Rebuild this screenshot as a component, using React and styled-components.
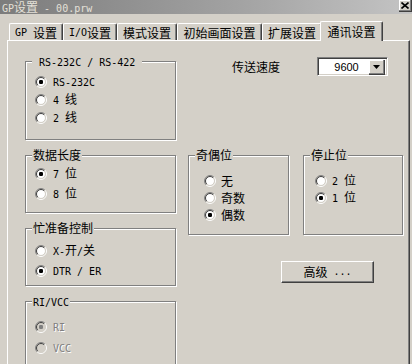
import React from "react";
import styled, { createGlobalStyle } from "styled-components";

const Global = createGlobalStyle`
  html, body { margin: 0; padding: 0; background: #d4d0c8; overflow: hidden; }
  body { font-family: "Noto Sans CJK SC", "Liberation Sans", sans-serif; font-size: 12px; color: #000; }
  #root { height: 364px; overflow: hidden; }
`;

const Latin = styled.span`
  font-family: "DejaVu Sans Mono", "Liberation Mono", monospace;
  font-size: 10px;
  white-space: pre;
`;

function Txt({ children }) {
  const parts = String(children).split(/([\x20-\x7E]+)/);
  return parts.map((p, i) =>
    p === "" ? null : /^[\x20-\x7E]+$/.test(p) ? (
      <Latin key={i}>{p}</Latin>
    ) : (
      <React.Fragment key={i}>{p}</React.Fragment>
    )
  );
}

const Window = styled.div`
  width: 412px;
  height: 364px;
  display: flex;
  flex-direction: column;
`;

const TitleBar = styled.div`
  height: 14px;
  display: flex;
  align-items: flex-start;
  justify-content: space-between;
  background: linear-gradient(90deg, #7c7c7c 0%, #a4a4a4 60%, #c4c4c4 100%);
  color: #e4e0d8;
  line-height: 14px;
  padding-left: 2px;
  font-size: 12px;
`;

const TitleText = styled.span`
  line-height: 14px;
  height: 14px;
`;

const CloseBtn = styled.div`
  width: 13px;
  height: 12px;
  box-sizing: border-box;
  background: #d4d0c8;
  border-right: 1px solid #404040;
  border-bottom: 1px solid #404040;
  box-shadow: inset -1px -1px 0 #808080, inset 1px 1px 0 #fff;
  display: flex;
  align-items: center;
  justify-content: center;
`;

const TabRow = styled.div`
  margin-top: 7px;
  height: 19px;
  display: flex;
  align-items: flex-end;
  padding-left: 9px;
  position: relative;
  z-index: 2;
`;

const Tab = styled.div`
  box-sizing: border-box;
  width: ${(p) => (p.$active ? p.$w + 4 : p.$w)}px;
  height: ${(p) => (p.$active ? 20 : 17)}px;
  margin: ${(p) => (p.$active ? "0 -2px -1px -2px" : "0")};
  background: #d4d0c8;
  border-top: 1px solid #fff;
  border-left: 1px solid #fff;
  border-right: 1px solid #404040;
  border-top-left-radius: 2px;
  border-top-right-radius: 2px;
  box-shadow: inset -1px 0 0 #808080;
  display: flex;
  align-items: center;
  justify-content: center;
  line-height: 14px;
  padding-top: ${(p) => (p.$active ? 0 : 1)}px;
  white-space: nowrap;
`;

const Panel = styled.div`
  margin-left: 7px;
  width: 403px;
  height: 340px;
  box-sizing: border-box;
  border-top: 1px solid #fff;
  border-left: 1px solid #fff;
  border-right: 1px solid #404040;
  box-shadow: inset -1px 0 0 #808080;
  padding: 16px 5px 0 17px;
  display: grid;
  grid-template-columns: 151px 215px;
  column-gap: 12px;
  align-items: start;
`;

const LeftCol = styled.div`
  padding-top: 4px;
  display: flex;
  flex-direction: column;
  gap: 15px;
`;

const RightCol = styled.div`
  display: flex;
  flex-direction: column;
`;

const Group = styled.div`
  position: relative;
  box-sizing: border-box;
  width: ${(p) => p.$w}px;
  height: ${(p) => p.$h}px;
  border: 1px solid #808080;
  box-shadow: inset 1px 1px 0 #fff, 1px 1px 0 #fff;
  padding: ${(p) => p.$pt}px 0 0 ${(p) => p.$pl}px;
  display: flex;
  flex-direction: column;
  gap: ${(p) => p.$gap}px;
`;

const Legend = styled.div`
  position: absolute;
  top: -7px;
  left: 6px;
  height: 12px;
  line-height: 12px;
  background: #d4d0c8;
  padding: 0 1px;
  white-space: pre;
  color: #000;
`;

const Option = styled.div`
  display: flex;
  align-items: center;
  gap: ${(p) => p.$gap || 6}px;
  height: 12px;
  line-height: 12px;
  white-space: nowrap;
  color: ${(p) => (p.$disabled ? "#808080" : "#000")};
  text-shadow: ${(p) => (p.$disabled ? "1px 1px 0 #fff" : "none")};
`;

const RadioSvg = styled.svg`
  flex: none;
  display: block;
`;

function Radio({ checked, disabled }) {
  return (
    <RadioSvg width="12" height="12" viewBox="0 0 12 12">
      <circle cx="6" cy="6" r="4.2" fill={disabled ? "#d4d0c8" : "#fff"} />
      <path d="M2.111 9.889 A5.5 5.5 0 0 1 9.889 2.111" stroke="#808080" fill="none" />
      <path d="M9.889 2.111 A5.5 5.5 0 0 1 2.111 9.889" stroke="#fff" fill="none" />
      <path d="M2.818 9.182 A4.5 4.5 0 0 1 9.182 2.818" stroke="#404040" fill="none" />
      <path d="M9.182 2.818 A4.5 4.5 0 0 1 2.818 9.182" stroke="#d4d0c8" fill="none" />
      {checked && <rect x="4" y="4" width="4" height="4" rx="1.2" fill={disabled ? "#808080" : "#000"} />}
    </RadioSvg>
  );
}

function Opt({ label, checked, disabled, gap }) {
  return (
    <Option $disabled={disabled} $gap={gap}>
      <Radio checked={checked} disabled={disabled} />
      <span>
        <Txt>{label}</Txt>
      </span>
    </Option>
  );
}

const SpeedRow = styled.div`
  display: flex;
  align-items: center;
  height: 19px;
  padding-left: 44px;
  gap: 37px;
`;

const SpeedLabel = styled.span`
  line-height: 12px;
  padding-top: 1px;
`;

const Select = styled.div`
  box-sizing: border-box;
  width: 71px;
  height: 19px;
  border-top: 1px solid #808080;
  border-left: 1px solid #808080;
  border-right: 1px solid #fff;
  border-bottom: 1px solid #fff;
  box-shadow: inset 1px 1px 0 #404040, inset -1px -1px 0 #d4d0c8;
  background: #fff;
  display: flex;
  padding: 2px;
`;

const SelectValue = styled.div`
  flex: 1;
  text-align: center;
  font-family: "Liberation Sans", sans-serif;
  font-size: 11px;
  line-height: 15px;
  padding-left: 4px;
`;

const DropBtn = styled.div`
  box-sizing: border-box;
  width: 16px;
  height: 15px;
  background: #d4d0c8;
  border-right: 1px solid #404040;
  border-bottom: 1px solid #404040;
  box-shadow: inset -1px -1px 0 #808080, inset 1px 1px 0 #fff;
  display: flex;
  align-items: center;
  justify-content: center;
`;

const GroupRow = styled.div`
  margin-top: 79px;
  display: flex;
  gap: 14px;
`;

const Button = styled.div`
  margin-top: 26px;
  margin-left: 93px;
  box-sizing: border-box;
  width: 93px;
  height: 22px;
  background: #d4d0c8;
  border-top: 1px solid #fff;
  border-left: 1px solid #fff;
  border-right: 1px solid #404040;
  border-bottom: 1px solid #404040;
  box-shadow: inset -1px -1px 0 #808080;
  display: flex;
  align-items: center;
  justify-content: center;
  line-height: 12px;
  white-space: pre;
`;

const tabs = [
  { label: "GP 设置", w: 54 },
  { label: "I/O设置", w: 54 },
  { label: "模式设置", w: 60 },
  { label: "初始画面设置", w: 85 },
  { label: "扩展设置", w: 60 },
  { label: "通讯设置", w: 59, active: true },
];

export default function App() {
  return (
    <Window>
      <Global />
      <TitleBar>
        <TitleText>
          <Txt>{"GP设置 - 00.prw"}</Txt>
        </TitleText>
        <CloseBtn>
          <svg width="8" height="7" viewBox="0 0 8 7">
            <path d="M0.5 0.5 L7.5 6.5 M7.5 0.5 L0.5 6.5" stroke="#000" strokeWidth="1.6" />
          </svg>
        </CloseBtn>
      </TitleBar>
      <TabRow>
        {tabs.map((t) => (
          <Tab key={t.label} $w={t.w} $active={t.active}>
            <Txt>{t.label}</Txt>
          </Tab>
        ))}
      </TabRow>
      <Panel>
        <LeftCol>
          <Group $w={151} $h={79} $pt={14} $pl={9} $gap={6}>
            <Legend>
              <Txt>{" RS-232C / RS-422 "}</Txt>
            </Legend>
            <Opt label="RS-232C" checked />
            <Opt label="4 线" />
            <Opt label="2 线" />
          </Group>
          <Group $w={151} $h={58} $pt={12} $pl={9} $gap={8}>
            <Legend>数据长度</Legend>
            <Opt label="7 位" checked />
            <Opt label="8 位" />
          </Group>
          <Group $w={151} $h={58} $pt={16} $pl={9} $gap={8}>
            <Legend>忙准备控制</Legend>
            <Opt label="X-开/关" />
            <Opt label="DTR / ER" checked />
          </Group>
          <Group $w={151} $h={90} $pt={19} $pl={9} $gap={9}>
            <Legend>
              <Txt>RI/VCC</Txt>
            </Legend>
            <Opt label="RI" checked disabled />
            <Opt label="VCC" disabled />
          </Group>
        </LeftCol>
        <RightCol>
          <SpeedRow>
            <SpeedLabel>传送速度</SpeedLabel>
            <Select>
              <SelectValue>9600</SelectValue>
              <DropBtn>
                <svg width="7" height="4" viewBox="0 0 7 4">
                  <path d="M0 0 H7 L3.5 4 Z" fill="#000" />
                </svg>
              </DropBtn>
            </Select>
          </SpeedRow>
          <GroupRow>
            <Group $w={101} $h={80} $pt={19} $pl={15} $gap={5}>
              <Legend>奇偶位</Legend>
              <Opt label="无" gap={5} />
              <Opt label="奇数" gap={5} />
              <Opt label="偶数" checked gap={5} />
            </Group>
            <Group $w={100} $h={80} $pt={19} $pl={11} $gap={5}>
              <Legend>停止位</Legend>
              <Opt label="2 位" gap={5} />
              <Opt label="1 位" checked gap={5} />
            </Group>
          </GroupRow>
          <Button>
            <Txt>{"高级 ..."}</Txt>
          </Button>
        </RightCol>
      </Panel>
    </Window>
  );
}
